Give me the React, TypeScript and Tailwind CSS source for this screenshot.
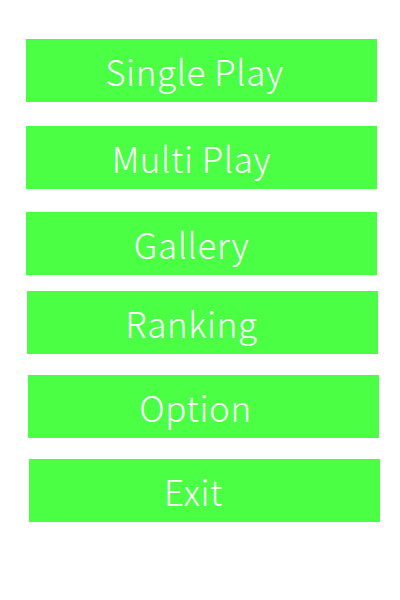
import React from 'react';

const items = [
  { label: 'Single Play', cls: 'mt-[39px] ml-[26px] pr-[14px]' },
  { label: 'Multi Play', cls: 'mt-[24px] ml-[26px] pr-[20px]' },
  { label: 'Gallery', cls: 'mt-[23px] ml-[26px] pr-[20px]' },
  { label: 'Ranking', cls: 'mt-[16px] ml-[27px] pr-[22px]' },
  { label: 'Option', cls: 'mt-[21px] ml-[28px] pr-[16px]' },
  { label: 'Exit', cls: 'mt-[21px] ml-[29px] pr-[22px]' },
];

export default function App() {
  return (
    <div className="w-[400px] h-[600px] bg-white flex flex-col" style={{ fontFamily: '"Noto Sans CJK JP", "Noto Sans", sans-serif' }}>
      {items.map((it) => (
        <button
          key={it.label}
          className={`w-[351px] h-[63px] shrink-0 bg-[#4aff44] text-white text-[35px] font-light tracking-[0.6px] leading-none flex items-center justify-center ${it.cls}`}
        >
          {it.label}
        </button>
      ))}
    </div>
  );
}
